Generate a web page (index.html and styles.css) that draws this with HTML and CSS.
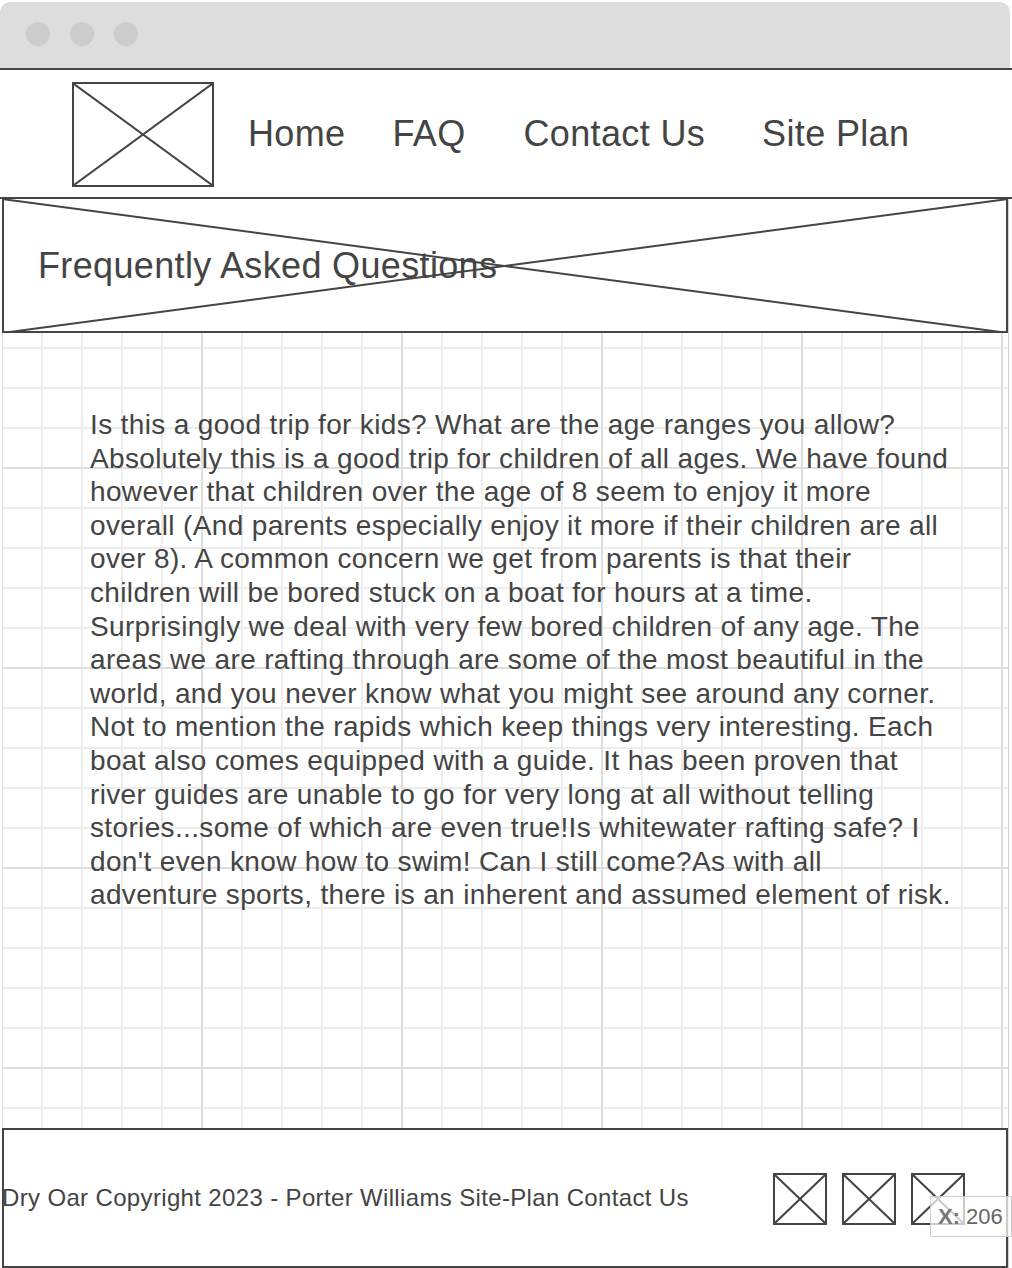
FILE: index.html
```html
<!DOCTYPE html>
<html lang="en">
<head>
<meta charset="utf-8">
<title>Dry Oar - FAQ</title>
<link rel="stylesheet" href="styles.css">
</head>
<body>
<div class="window">
  <div class="titlebar">
    <span class="dot"></span>
    <span class="dot"></span>
    <span class="dot"></span>
  </div>
  <header class="nav">
    <div class="logo">
      <svg class="cross" viewBox="0 0 100 100" preserveAspectRatio="none" aria-hidden="true">
        <line x1="0" y1="0" x2="100" y2="100" vector-effect="non-scaling-stroke"/>
        <line x1="100" y1="0" x2="0" y2="100" vector-effect="non-scaling-stroke"/>
      </svg>
    </div>
    <a class="nav-link link-home" href="#">Home</a>
    <a class="nav-link link-faq" href="#">FAQ</a>
    <a class="nav-link link-contact" href="#">Contact Us</a>
    <a class="nav-link link-plan" href="#">Site Plan</a>
  </header>
  <main class="page">
    <section class="banner">
      <svg class="cross banner-cross" viewBox="0 0 100 100" preserveAspectRatio="none" aria-hidden="true">
        <line x1="0" y1="0" x2="100" y2="100" vector-effect="non-scaling-stroke"/>
        <line x1="100" y1="0" x2="0" y2="100" vector-effect="non-scaling-stroke"/>
      </svg>
      <h1 class="banner-title">Frequently Asked Questions</h1>
    </section>
    <section class="content">
      <p class="faq-text">Is this a good trip for kids? What are the age ranges you allow? Absolutely this is a good trip for children of all ages. We have found however that children over the age of 8 seem to enjoy it more overall (And parents especially enjoy it more if their children are all over 8). A common concern we get from parents is that their children will be bored stuck on a boat for hours at a time. Surprisingly we deal with very few bored children of any age. The areas we are rafting through are some of the most beautiful in the world, and you never know what you might see around any corner. Not to mention the rapids which keep things very interesting. Each boat also comes equipped with a guide. It has been proven that river guides are unable to go for very long at all without telling stories...some of which are even true!Is whitewater rafting safe? I don't even know how to swim! Can I still come?As with all adventure sports, there is an inherent and assumed element of risk.</p>
    </section>
    <footer class="footer">
      <p class="footer-text">Dry Oar Copyright 2023 - Porter Williams Site-Plan Contact Us</p>
      <div class="icons">
        <span class="icon">
          <svg class="cross" viewBox="0 0 100 100" preserveAspectRatio="none" aria-hidden="true">
            <line x1="0" y1="0" x2="100" y2="100" vector-effect="non-scaling-stroke"/>
            <line x1="100" y1="0" x2="0" y2="100" vector-effect="non-scaling-stroke"/>
          </svg>
        </span>
        <span class="icon">
          <svg class="cross" viewBox="0 0 100 100" preserveAspectRatio="none" aria-hidden="true">
            <line x1="0" y1="0" x2="100" y2="100" vector-effect="non-scaling-stroke"/>
            <line x1="100" y1="0" x2="0" y2="100" vector-effect="non-scaling-stroke"/>
          </svg>
        </span>
        <span class="icon">
          <svg class="cross" viewBox="0 0 100 100" preserveAspectRatio="none" aria-hidden="true">
            <line x1="0" y1="0" x2="100" y2="100" vector-effect="non-scaling-stroke"/>
            <line x1="100" y1="0" x2="0" y2="100" vector-effect="non-scaling-stroke"/>
          </svg>
        </span>
      </div>
    </footer>
  </main>
  <div class="badge"><b class="badge-key">X:</b> 206</div>
</div>
</body>
</html>
```
FILE: styles.css
```css
html, body {
  margin: 0;
  padding: 0;
}

body {
  width: 1012px;
  height: 1268px;
  overflow: hidden;
  background: #ffffff;
  font-family: "Liberation Sans", Arial, sans-serif;
  color: #444444;
  letter-spacing: 0.35px;
}

.window {
  position: relative;
  width: 1012px;
}

.titlebar {
  box-sizing: border-box;
  width: 1010px;
  height: 66px;
  margin-top: 2px;
  padding-bottom: 2px;
  background: #dddddd;
  border-radius: 10px 10px 0 0;
  display: flex;
  align-items: center;
  gap: 20px;
  padding-left: 26px;
}

.dot {
  width: 24px;
  height: 24px;
  border-radius: 50%;
  background: #cccccc;
}

.nav {
  height: 127px;
  border-top: 2px solid #444444;
  border-bottom: 2px solid #444444;
  display: flex;
  align-items: center;
  padding-left: 72px;
}

.logo {
  box-sizing: border-box;
  width: 142px;
  height: 105px;
  border: 2px solid #444444;
  margin-top: 1px;
}

.cross {
  display: block;
  width: 100%;
  height: 100%;
}

.cross line {
  stroke: #444444;
  stroke-width: 2;
}

.nav-link {
  font-size: 36px;
  color: #444444;
  text-decoration: none;
  line-height: 1;
}

.link-home { margin-left: 34px; }
.link-faq { margin-left: 47px; }
.link-contact { margin-left: 58px; }
.link-plan { margin-left: 57px; }

.page {
  width: 1006px;
  margin-left: 2px;
  box-shadow: 1px 0 0 #d4d4d4;
}

.banner {
  position: relative;
  box-sizing: border-box;
  height: 134px;
  border: 2px solid #444444;
  border-top: 0;
  display: flex;
  align-items: center;
  padding-left: 34px;
}

.banner-cross {
  position: absolute;
  left: -2px;
  top: 0;
  width: calc(100% + 4px);
  height: calc(100% + 2px);
}

.banner-title {
  position: relative;
  margin: 0;
  font-size: 36px;
  font-weight: normal;
  line-height: 1;
  color: #444444;
  margin-top: 1px;
}

.content {
  box-sizing: border-box;
  height: 795px;
  padding: 75px 0 0 88px;
  background-color: #ffffff;
  background-image:
    linear-gradient(to right, #dedede 0, #dedede 2px, transparent 2px),
    linear-gradient(to bottom, #dedede 0, #dedede 2px, transparent 2px),
    linear-gradient(to right, #ececec 0, #ececec 2px, transparent 2px),
    linear-gradient(to bottom, #ececec 0, #ececec 2px, transparent 2px);
  background-size: 200px 200px, 200px 200px, 40px 40px, 40px 40px;
  background-position: -1px 0, 0 134px, -1px 0, 0 14px;
}

.faq-text {
  margin: 0;
  width: 866px;
  font-size: 28px;
  line-height: 33.6px;
  color: #444444;
}

.footer {
  box-sizing: border-box;
  height: 140px;
  border: 2px solid #444444;
  display: flex;
  align-items: center;
  justify-content: space-between;
  padding-right: 41px;
  background: #ffffff;
}

.footer-text {
  margin: 0 0 0 -2px;
  font-size: 24px;
  line-height: 1;
  color: #444444;
}

.icons {
  display: flex;
  gap: 15px;
  margin-top: 1px;
}

.icon {
  box-sizing: border-box;
  width: 54px;
  height: 52px;
  border: 2px solid #444444;
  display: block;
}

.badge {
  position: absolute;
  left: 930px;
  top: 1194px;
  box-sizing: border-box;
  width: 82px;
  height: 41px;
  padding-left: 7px;
  display: flex;
  align-items: center;
  gap: 6px;
  background: rgba(255, 255, 255, 0.72);
  border: 1px solid rgba(190, 190, 190, 0.7);
  font-size: 22px;
  letter-spacing: 0;
  color: #666666;
  white-space: nowrap;
}

.badge-key {
  color: #777777;
  font-weight: bold;
}
```
